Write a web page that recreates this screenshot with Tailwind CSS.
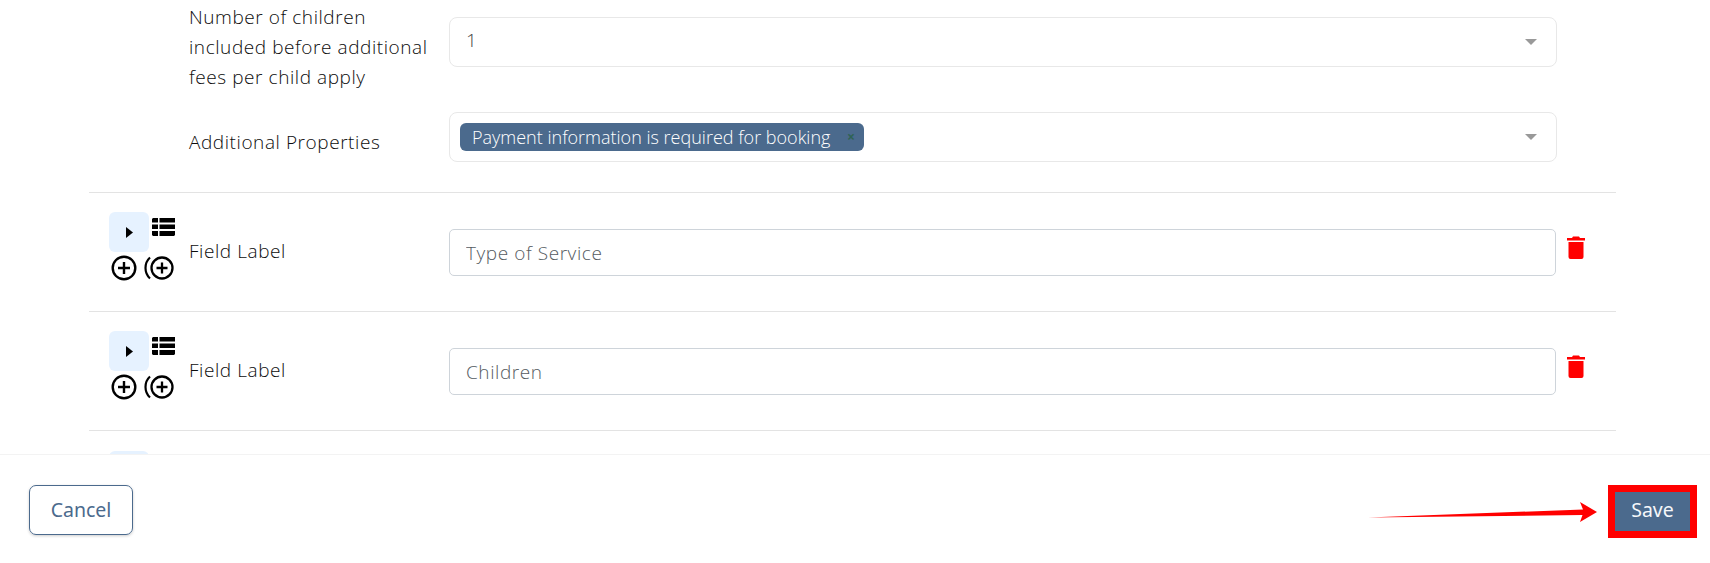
<!DOCTYPE html>
<html lang="en">
<head>
  <meta charset="UTF-8" />
  <title>Edit Service</title>
  <script src="https://cdn.jsdelivr.net/npm/@tailwindcss/browser@4"></script>
</head>
<body class="bg-white font-['Open_Sans','Noto_Sans',sans-serif] font-light text-[#0c0c0c]">
  <div class="relative flex h-[563px] w-[1710px] flex-col overflow-hidden">

    <div class="h-[454px] overflow-hidden pl-[89px]">
      <div class="w-[1527px]">
        <!-- select rows -->
        <div class="flex h-[192px] flex-col">
          <div class="flex pt-[2px] pl-[100px]">
            <div class="w-[260px] pr-[10px] text-[19px] leading-[30px] tracking-[0.03em]">Number of children included before additional fees per child apply</div>
            <div class="mt-[15px] flex h-[50px] w-[1108px] items-center justify-between rounded-[8px] border border-[#e8e8e8] pr-[19px] pb-[4px] pl-[16px] text-[19px] text-[#444444]">
              <span>1</span>
              <span class="mt-[4px] h-0 w-0 border-x-[6px] border-t-[6px] border-x-transparent border-t-[#999999]"></span>
            </div>
          </div>
          <div class="mt-[20px] flex items-start pl-[100px]">
            <div class="w-[260px] pt-[15px] text-[19px] leading-[30px] tracking-[0.03em]">Additional Properties</div>
            <div class="flex h-[50px] w-[1108px] items-center justify-between rounded-[8px] border border-[#e8e8e8] pr-[19px] pl-[10px]">
              <span class="flex h-[28px] w-[404px] items-center justify-between rounded-[6px] bg-[#4b6a8d] pr-[9px] pl-[12px] text-[18px] text-white">
                Payment information is required for booking
                <span class="text-[14px] leading-none font-bold text-[#2f6355]">×</span>
              </span>
              <span class="h-0 w-0 border-x-[6px] border-t-[6px] border-x-transparent border-t-[#999999]"></span>
            </div>
          </div>
        </div>

        <!-- field rows -->
        <div class="flex h-[119px] border-t border-[#e3e3e3]">
          <div class="flex w-[100px] flex-col pt-[19px] pl-[20px]">
            <div class="flex items-start gap-[3px]">
              <button class="flex h-[40px] w-[40px] items-center justify-center rounded-[6px] bg-[#e6f2ff]">
                <svg width="7" height="11" viewBox="0 0 7 11"><path d="M0 0l7 5.5L0 11z" fill="#000" /></svg>
              </button>
              <svg class="mt-[6px]" width="23" height="18" viewBox="0 0 23 18" fill="#000"><path d="M1 0h5v4.500H0V1zM7.500 0H23v4.500H7.500zM0 6.500h6V11H0zM7.500 6.500H23V11H7.500zM0 13h6v5H1l-1-1zM7.500 13H23v4l-1 1H7.500z" /></svg>
            </div>
            <div class="mt-[3px] flex items-center gap-[6px] pl-[2px]">
              <svg width="26" height="26" viewBox="0 0 26 26" fill="none" stroke="#000"><circle cx="13" cy="13" r="11.3" stroke-width="2.4" /><path d="M13 7v12M7 13h12" stroke-width="2.4" /></svg>
              <svg width="32" height="24" viewBox="0 0 32 24" fill="none" stroke="#000"><path d="M7 1.5C1 7 1 17 7 22.5" stroke-width="2.2" /><circle cx="19" cy="12" r="10.5" stroke-width="2.3" /><path d="M19 6.500v11M13.500 12h11" stroke-width="2.3" /></svg>
            </div>
          </div>
          <div class="flex w-[260px] items-start pt-[45px] text-[19px] leading-[27px] tracking-[0.03em]">Field Label</div>
          <input class="mt-[36px] h-[47px] w-[1107px] rounded-[5px] border border-[#ced4da] px-[16px] text-[19px] tracking-[0.03em] outline-none placeholder:text-[#555b61]" placeholder="Type of Service" />
          <svg class="mt-[43px] ml-[11px]" width="18" height="23" viewBox="0 0 18 23" fill="#ff0000"><path d="M6 0.500h6l1 1.500h5v2.500H0V2h5zM1.500 6h15v15a2 2 0 0 1-2 2h-11a2 2 0 0 1-2-2z" /></svg>
        </div>

        <div class="flex h-[119px] border-t border-[#e3e3e3]">
          <div class="flex w-[100px] flex-col pt-[19px] pl-[20px]">
            <div class="flex items-start gap-[3px]">
              <button class="flex h-[40px] w-[40px] items-center justify-center rounded-[6px] bg-[#e6f2ff]">
                <svg width="7" height="11" viewBox="0 0 7 11"><path d="M0 0l7 5.5L0 11z" fill="#000" /></svg>
              </button>
              <svg class="mt-[6px]" width="23" height="18" viewBox="0 0 23 18" fill="#000"><path d="M1 0h5v4.500H0V1zM7.500 0H23v4.500H7.500zM0 6.500h6V11H0zM7.500 6.500H23V11H7.500zM0 13h6v5H1l-1-1zM7.500 13H23v4l-1 1H7.500z" /></svg>
            </div>
            <div class="mt-[3px] flex items-center gap-[6px] pl-[2px]">
              <svg width="26" height="26" viewBox="0 0 26 26" fill="none" stroke="#000"><circle cx="13" cy="13" r="11.3" stroke-width="2.4" /><path d="M13 7v12M7 13h12" stroke-width="2.4" /></svg>
              <svg width="32" height="24" viewBox="0 0 32 24" fill="none" stroke="#000"><path d="M7 1.5C1 7 1 17 7 22.5" stroke-width="2.2" /><circle cx="19" cy="12" r="10.5" stroke-width="2.3" /><path d="M19 6.500v11M13.500 12h11" stroke-width="2.3" /></svg>
            </div>
          </div>
          <div class="flex w-[260px] items-start pt-[45px] text-[19px] leading-[27px] tracking-[0.03em]">Field Label</div>
          <input class="mt-[36px] h-[47px] w-[1107px] rounded-[5px] border border-[#ced4da] px-[16px] text-[19px] tracking-[0.03em] outline-none placeholder:text-[#555b61]" placeholder="Children" />
          <svg class="mt-[43px] ml-[11px]" width="18" height="23" viewBox="0 0 18 23" fill="#ff0000"><path d="M6 0.500h6l1 1.500h5v2.500H0V2h5zM1.500 6h15v15a2 2 0 0 1-2 2h-11a2 2 0 0 1-2-2z" /></svg>
        </div>

        <div class="h-[24px] border-t border-[#e3e3e3] pt-[20px] pl-[20px]">
          <div class="h-[40px] w-[40px] rounded-[6px] bg-[#e6f2ff]"></div>
        </div>
      </div>
    </div>

    <!-- footer -->
    <div class="flex h-[109px] items-start justify-between border-t border-[#f3f3f3] bg-white pt-[30px] pr-[20px] pl-[29px] font-['Noto_Sans',sans-serif] text-[19.5px] font-normal">
      <button class="h-[50px] w-[104px] rounded-[7px] border border-[#4b6a8d] text-[#4b6a8d] shadow-[0_1px_3px_rgba(0,0,0,0.2)]">Cancel</button>
      <button class="h-[50px] w-[75px] rounded-[2px] bg-[#4b6a8d] text-[#f5f7fa]">Save</button>
    </div>

    <!-- screenshot annotation: red box and arrow -->
    <div class="absolute top-[485px] left-[1608px] h-[53px] w-[89px] border-[7px] border-[#ff0000]"></div>
    <svg class="absolute top-[500px] left-[1368px]" width="232" height="24" viewBox="0 0 232 24"><path d="M0 17.500L215 9.500L212 2L229 12L212 22L214.500 15z" fill="#ff0000" /></svg>
  </div>
</body>
</html>
